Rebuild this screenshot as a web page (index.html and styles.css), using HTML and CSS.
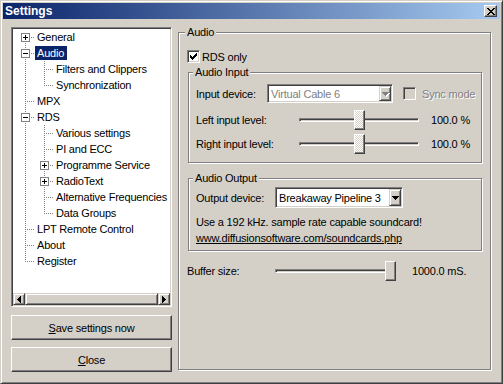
FILE: index.html
```html
<!DOCTYPE html>
<html lang="en">
<head>
    <meta charset="UTF-8">
    <title>Settings</title>
    <link rel="stylesheet" href="styles.css">
</head>
<body>

    <div class="window">
        <div class="titlebar">
            <span class="title">Settings</span>
            <span class="title-close">
                <svg width="8" height="7" viewBox="0 0 8 7"><path d="M0 0h2v1H0zM6 0h2v1H6zM1 1h2v1H1zM5 1h2v1H5zM2 2h4v1H2zM3 3h2v1H3zM2 4h4v1H2zM1 5h2v1H1zM5 5h2v1H5zM0 6h2v1H0zM6 6h2v1H6z"/></svg>
            </span>
        </div>

        <div class="client">
            <!-- Left side: page tree and buttons -->
            <div class="side">
                <div class="tree">
                    <ul class="tree-list">
                        <li class="node"><span class="cell first"><i class="box plus"></i></span><span class="label">General</span></li>
                        <li class="node"><span class="cell tee"><i class="box minus"></i></span><span class="label selected">Audio</span></li>
                        <li class="node"><span class="cell pipe"></span><span class="cell tee"></span><span class="label">Filters and Clippers</span></li>
                        <li class="node"><span class="cell pipe"></span><span class="cell end"></span><span class="label">Synchronization</span></li>
                        <li class="node"><span class="cell tee"></span><span class="label">MPX</span></li>
                        <li class="node"><span class="cell tee"><i class="box minus"></i></span><span class="label">RDS</span></li>
                        <li class="node"><span class="cell pipe"></span><span class="cell tee"></span><span class="label">Various settings</span></li>
                        <li class="node"><span class="cell pipe"></span><span class="cell tee"></span><span class="label">PI and ECC</span></li>
                        <li class="node"><span class="cell pipe"></span><span class="cell tee"><i class="box plus"></i></span><span class="label">Programme Service</span></li>
                        <li class="node"><span class="cell pipe"></span><span class="cell tee"><i class="box plus"></i></span><span class="label">RadioText</span></li>
                        <li class="node"><span class="cell pipe"></span><span class="cell tee"></span><span class="label">Alternative Frequencies</span></li>
                        <li class="node"><span class="cell pipe"></span><span class="cell end"></span><span class="label">Data Groups</span></li>
                        <li class="node"><span class="cell tee"></span><span class="label">LPT Remote Control</span></li>
                        <li class="node"><span class="cell tee"></span><span class="label">About</span></li>
                        <li class="node"><span class="cell end"></span><span class="label">Register</span></li>
                    </ul>
                    <div class="hscroll">
                        <span class="sb-btn"><svg width="4" height="7" viewBox="0 0 4 7"><path d="M3 0h1v7H3zM2 1h1v5H2zM1 2h1v3H1zM0 3h1v1H0z"/></svg></span>
                        <span class="sb-thumb"></span>
                        <span class="sb-btn"><svg width="4" height="7" viewBox="0 0 4 7"><path d="M0 0h1v7H0zM1 1h1v5H1zM2 2h1v3H2zM3 3h1v1H3z"/></svg></span>
                    </div>
                </div>
                <button class="btn btn-save"><u>S</u>ave settings now</button>
                <button class="btn btn-close"><u>C</u>lose</button>
            </div>

            <!-- Right side: Audio page -->
            <fieldset class="group group-audio">
                <legend>Audio</legend>

                <label class="check-row rds-row">
                    <span class="check"><svg width="7" height="7" viewBox="0 0 7 7"><path d="M6 0h1v1H6zM5 1h2v1H5zM0 2h1v1H0zM4 2h3v1H4zM0 3h2v1H0zM3 3h3v1H3zM0 4h5v1H0zM1 5h3v1H1zM2 6h1v1H2z"/></svg></span>
                    RDS only
                </label>

                <fieldset class="group group-inner group-input">
                    <legend>Audio Input</legend>
                    <div class="field-row">
                        <span class="field-label label-input">Input device:</span>
                        <div class="combo combo-input disabled">
                            <span class="combo-text">Virtual Cable 6</span>
                            <span class="combo-btn"><svg width="7" height="4" viewBox="0 0 7 4"><path d="M0 0h7v1H0zM1 1h5v1H1zM2 2h3v1H2zM3 3h1v1H3z"/></svg></span>
                        </div>
                        <label class="check-row sync-row disabled">
                            <span class="check"></span>
                            Sync mode
                        </label>
                    </div>
                    <div class="level-row level-first">
                        <span class="field-label label-level">Left input level:</span>
                        <div class="slider slider-input">
                            <span class="channel"></span>
                            <span class="thumb disabled" style="left: 55px"></span>
                        </div>
                        <span class="level-value">100.0 %</span>
                    </div>
                    <div class="level-row">
                        <span class="field-label label-level">Right input level:</span>
                        <div class="slider slider-input">
                            <span class="channel"></span>
                            <span class="thumb disabled" style="left: 55px"></span>
                        </div>
                        <span class="level-value">100.0 %</span>
                    </div>
                </fieldset>

                <fieldset class="group group-inner group-output">
                    <legend>Audio Output</legend>
                    <div class="field-row">
                        <span class="field-label label-output">Output device:</span>
                        <div class="combo combo-output">
                            <span class="combo-text">Breakaway Pipeline 3</span>
                            <span class="combo-btn"><svg width="7" height="4" viewBox="0 0 7 4"><path d="M0 0h7v1H0zM1 1h5v1H1zM2 2h3v1H2zM3 3h1v1H3z"/></svg></span>
                        </div>
                    </div>
                    <p class="note">Use a 192 kHz. sample rate capable soundcard!<br>
                        <a href="#">www.diffusionsoftware.com/soundcards.php</a></p>
                </fieldset>

                <div class="level-row buffer-row">
                    <span class="field-label label-buffer">Buffer size:</span>
                    <div class="slider slider-buffer">
                        <span class="channel"></span>
                        <span class="thumb" style="left: 110px"></span>
                    </div>
                    <span class="level-value buffer-value">1000.0 mS.</span>
                </div>
            </fieldset>
        </div>
    </div>

</body>
</html>
```

FILE: styles.css
```css
/* General */
body {
    margin: 0;
    background: #d4d0c8;
    font-family: "Liberation Sans", Arial, sans-serif;
    font-size: 11px;
    letter-spacing: -0.2px;
    color: #000;
}

/* Window frame */
.window {
    width: 503px;
    height: 384px;
    box-sizing: border-box;
    padding: 2px;
    border: 1px solid;
    border-color: #d4d0c8 #404040 #404040 #d4d0c8;
    box-shadow: inset 1px 1px 0 #fff, inset -1px -1px 0 #808080;
    display: flex;
    flex-direction: column;
}
.titlebar {
    height: 16px;
    flex: none;
    display: flex;
    align-items: center;
    justify-content: space-between;
    padding: 0 3px 0 2px;
    background: linear-gradient(to right, #0a246a, #a6caf0);
}
.title {
    color: #fff;
    font-weight: bold;
    font-size: 12px;
    letter-spacing: 0;
}
.title-close {
    width: 13px;
    height: 12px;
    box-sizing: border-box;
    display: flex;
    align-items: center;
    justify-content: center;
    background: #d4d0c8;
    border: 1px solid;
    border-color: #fff #404040 #404040 #fff;
    box-shadow: inset -1px -1px 0 #808080;
}

/* Client area */
.client {
    flex: 1;
    display: flex;
    gap: 6px;
    padding: 8px 9px 9px 8px;
}
.side {
    width: 161px;
    flex: none;
    display: flex;
    flex-direction: column;
}

/* Tree view */
.tree {
    height: 280px;
    box-sizing: border-box;
    border: 1px solid;
    border-color: #808080 #fff #fff #808080;
    box-shadow: inset 1px 1px 0 #404040, inset -1px -1px 0 #d4d0c8;
    padding: 1px;
    background: #fff;
    display: flex;
    flex-direction: column;
}
.tree-list {
    flex: 1;
    list-style: none;
    margin: 0;
    padding: 0 0 0 3px;
    overflow: hidden;
    --vdot: repeating-linear-gradient(#808080 0 1px, transparent 1px 2px);
    --hdot: repeating-linear-gradient(90deg, #808080 0 1px, transparent 1px 2px);
}
.node {
    height: 16px;
    display: flex;
    align-items: center;
    white-space: nowrap;
}
.cell {
    flex: none;
    width: 19px;
    height: 16px;
    display: flex;
    justify-content: center;
    align-items: flex-start;
}
.cell.pipe {
    background: var(--vdot) 9px 0 / 1px 16px no-repeat;
}
.cell.tee {
    background: var(--vdot) 9px 0 / 1px 16px no-repeat,
                var(--hdot) 11px 8px / 8px 1px no-repeat;
}
.cell.end {
    background: var(--vdot) 9px 0 / 1px 9px no-repeat,
                var(--hdot) 11px 8px / 8px 1px no-repeat;
}
.cell.first {
    background: var(--vdot) 9px 8px / 1px 8px no-repeat,
                var(--hdot) 11px 8px / 8px 1px no-repeat;
}
.box {
    width: 9px;
    height: 9px;
    margin-top: 4px;
    box-sizing: border-box;
    border: 1px solid #808080;
}
.box.minus {
    background: linear-gradient(#000, #000) center / 5px 1px no-repeat, #fff;
}
.box.plus {
    background: linear-gradient(#000, #000) center / 5px 1px no-repeat,
                linear-gradient(#000, #000) center / 1px 5px no-repeat, #fff;
}
.label {
    display: inline-block;
    line-height: 14px;
    padding: 0 3px 0 2px;
}
.label.selected {
    background: #0a246a;
    color: #fff;
}

/* Horizontal scroll bar */
.hscroll {
    height: 12px;
    flex: none;
    display: flex;
    background: #e8e6e2;
}
.sb-btn,
.sb-thumb {
    box-sizing: border-box;
    background: #d4d0c8;
    border: 1px solid;
    border-color: #d4d0c8 #404040 #404040 #d4d0c8;
    box-shadow: inset 1px 1px 0 #fff, inset -1px -1px 0 #808080;
}
.sb-btn {
    width: 12px;
    display: flex;
    align-items: center;
    justify-content: center;
}
.sb-thumb {
    flex: 1;
}

/* Buttons */
.btn {
    height: 25px;
    margin-top: 8px;
    padding: 0;
    font: inherit;
    letter-spacing: inherit;
    color: #000;
    background: #d4d0c8;
    border: 1px solid;
    border-color: #fff #404040 #404040 #fff;
    box-shadow: inset -1px -1px 0 #808080;
}
.btn-close {
    margin-top: 7px;
}

/* Group boxes */
.group {
    margin: 0;
    padding: 0;
    min-width: 0;
    border: 1px solid #808080;
    box-shadow: 1px 1px 0 #fff, inset 1px 1px 0 #fff;
}
.group legend {
    padding: 0 2px;
    margin-left: 6px;
    line-height: 13px;
    background: #d4d0c8;
}
.group-audio {
    flex: 1;
    margin: -1px 0 2px;
}
.group-inner legend {
    margin-left: 4px;
}
.group-input {
    margin: 3px 8px 0 9px;
    padding-bottom: 6px;
}
.group-output {
    margin: 9px 8px 0 9px;
    padding-bottom: 4px;
}

/* Check boxes */
.check-row {
    display: flex;
    align-items: center;
    gap: 2px;
    height: 13px;
}
.rds-row {
    margin: 11px 0 0 8px;
}
.check {
    width: 13px;
    height: 13px;
    box-sizing: border-box;
    display: flex;
    align-items: center;
    justify-content: center;
    background: #fff;
    border: 1px solid;
    border-color: #808080 #fff #fff #808080;
    box-shadow: inset 1px 1px 0 #404040, inset -1px -1px 0 #d4d0c8;
}
.sync-row {
    margin-left: 10px;
    gap: 6px;
}
.sync-row.disabled {
    color: #808080;
    text-shadow: 1px 1px 0 #fff;
}
.sync-row .check {
    background: #d4d0c8;
}

/* Field rows */
.field-row {
    display: flex;
    align-items: center;
    padding-left: 7px;
}
.group-input .field-row {
    margin-top: 5px;
    height: 19px;
}
.group-output .field-row {
    margin-top: 2px;
    height: 21px;
}
.field-label {
    flex: none;
}
.label-input { width: 71px; }
.label-output { width: 79px; }
.label-level { width: 103px; }
.label-buffer { width: 88px; }

/* Combo boxes */
.combo {
    height: 100%;
    box-sizing: border-box;
    display: flex;
    padding: 1px;
    background: #fff;
    border: 1px solid;
    border-color: #808080 #fff #fff #808080;
    box-shadow: inset 1px 1px 0 #404040, inset -1px -1px 0 #d4d0c8;
}
.combo-input { width: 126px; }
.combo-output { width: 128px; }
.combo-text {
    flex: 1;
    display: flex;
    align-items: center;
    padding-left: 2px;
    white-space: nowrap;
}
.combo-btn {
    width: 12px;
    flex: none;
    box-sizing: border-box;
    display: flex;
    align-items: center;
    justify-content: center;
    background: #d4d0c8;
    border: 1px solid;
    border-color: #d4d0c8 #404040 #404040 #d4d0c8;
    box-shadow: inset 1px 1px 0 #fff, inset -1px -1px 0 #808080;
}
.combo.disabled .combo-text {
    color: #808080;
}
.combo.disabled .combo-btn svg {
    fill: #808080;
    filter: drop-shadow(1px 1px 0 #fff);
}

/* Track bars */
.level-row {
    display: flex;
    align-items: center;
    height: 24px;
    padding-left: 7px;
}
.level-first {
    margin-top: 5px;
}
.slider {
    position: relative;
    display: flex;
    align-items: center;
    height: 20px;
    flex: none;
}
.slider-input { width: 120px; }
.slider-buffer { width: 117px; }
.channel {
    flex: 1;
    height: 4px;
    box-sizing: border-box;
    background: #d4d0c8;
    border: 1px solid;
    border-color: #808080 #fff #fff #808080;
    box-shadow: inset 1px 1px 0 #404040;
}
.thumb {
    position: absolute;
    top: 0;
    width: 11px;
    height: 20px;
    box-sizing: border-box;
    background: #d4d0c8;
    border: 1px solid;
    border-color: #fff #404040 #404040 #fff;
    box-shadow: inset -1px -1px 0 #808080;
}
.thumb.disabled {
    background: repeating-conic-gradient(#fff 0 25%, #d4d0c8 0 50%) 0 0 / 2px 2px;
}
.level-value {
    margin-left: 12px;
}
.buffer-row {
    margin-top: 10px;
    height: 20px;
    padding-left: 8px;
}
.buffer-value {
    margin-left: 20px;
}

/* Output note */
.note {
    margin: 6px 0 0;
    padding-left: 7px;
    line-height: 16px;
}
.note a {
    color: #000;
    text-decoration: underline;
}
```
